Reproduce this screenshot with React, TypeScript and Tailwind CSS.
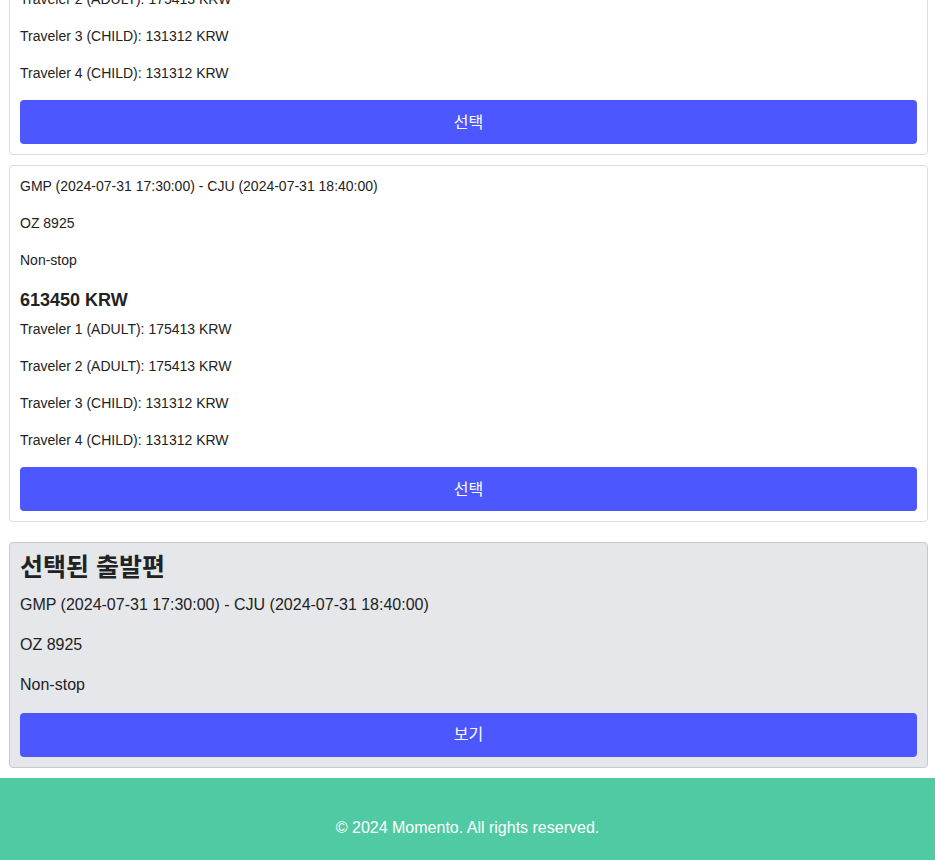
const travelers = [
  { type: 'ADULT', price: 175413 },
  { type: 'ADULT', price: 175413 },
  { type: 'CHILD', price: 131312 },
  { type: 'CHILD', price: 131312 },
];

const flight = {
  route: 'GMP (2024-07-31 17:30:00) - CJU (2024-07-31 18:40:00)',
  code: 'OZ 8925',
  stops: 'Non-stop',
  total: 613450,
};

const font = "font-['Liberation_Sans','Noto_Sans_CJK_KR',sans-serif]";

function FlightCard() {
  return (
    <div className="mb-[10px] rounded-[4px] border border-[#dcdcdc] bg-white p-[10px] text-[14px] leading-[21px] text-[#222]">
      <p className="mb-4">{flight.route}</p>
      <p className="mb-4">{flight.code}</p>
      <p className="mb-4">{flight.stops}</p>
      <h3 className="mb-[5px] text-[18px] font-bold leading-[27px]">{flight.total} KRW</h3>
      {travelers.map((t, i) => (
        <p key={i} className="mb-4">
          Traveler {i + 1} ({t.type}): {t.price} KRW
        </p>
      ))}
      <button className="h-[44px] w-full rounded-[4px] bg-[#4c57ff] text-[16px] text-white">선택</button>
    </div>
  );
}

export default function App() {
  return (
    <div className={`${font} -mt-[202px] bg-white`}>
      <div className="ml-[9px] mr-[7px]">
        <FlightCard />
        <FlightCard />

        {/* selected outbound */}
        <div className="mt-[20px] rounded-[4px] border border-[#c9c9cc] bg-[#e6e7eb] p-[10px] text-[16px] leading-[24px] text-[#222]">
          <h2 className="mb-[11px] text-[25px] font-bold leading-[29px]">선택된 출발편</h2>
          <p className="mb-4">{flight.route}</p>
          <p className="mb-4">{flight.code}</p>
          <p>{flight.stops}</p>
          <button className="mt-[16px] h-[44px] w-full rounded-[4px] bg-[#4c57ff] text-[16px] text-white">보기</button>
        </div>
      </div>

      <footer className="mt-[10px] bg-[#50caa3] pt-[38px] pb-[36px] text-center text-[16px] leading-[24px] text-white">
        © 2024 Momento. All rights reserved.
      </footer>
    </div>
  );
}
